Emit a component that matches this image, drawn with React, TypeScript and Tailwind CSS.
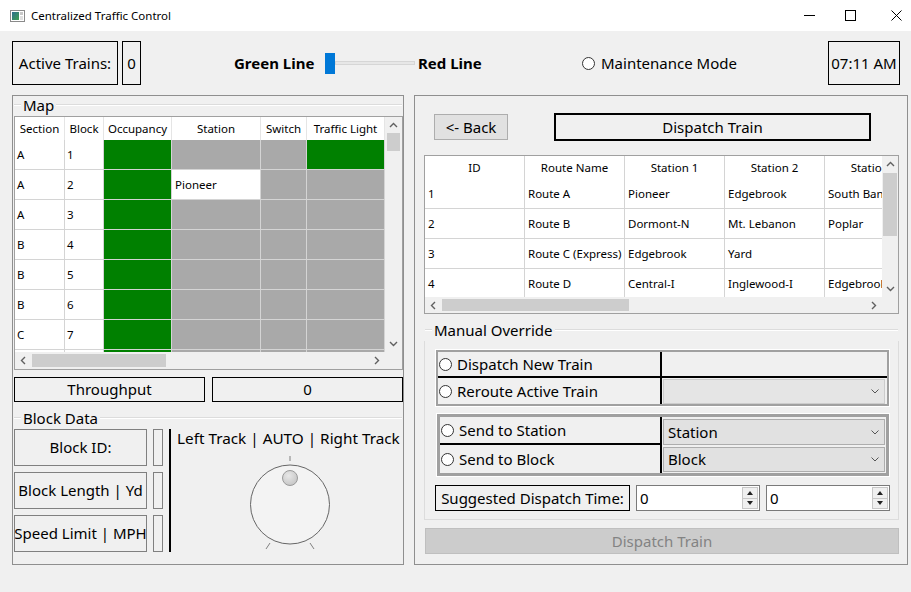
import React from 'react';

const FONT = "font-['Noto_Sans',sans-serif]";

type Dir = 'up' | 'down' | 'left' | 'right';

const Arrow = ({ dir, color = '#606060' }: { dir: Dir; color?: string }) => {
  const d: Record<Dir, string> = {
    up: 'M1 6 L4.5 2.5 L8 6',
    down: 'M1 3 L4.5 6.5 L8 3',
    left: 'M6 1 L2.5 4.5 L6 8',
    right: 'M3 1 L6.5 4.5 L3 8',
  };
  return (
    <svg width="9" height="9" viewBox="0 0 9 9">
      <path d={d[dir]} fill="none" stroke={color} strokeWidth="1.4" />
    </svg>
  );
};

const Radio = () => (
  <span className="w-[13px] h-[13px] rounded-full border border-[#333333] bg-white shrink-0" />
);

// group box caption with the etched frame line running behind it
const GroupTitle = ({ title }: { title: string }) => (
  <div className="h-[20px] pb-[3px] flex items-center shrink-0">
    <div className="ml-px w-[7px] h-[2px] border-t border-[#dcdcdc] border-b border-b-white" />
    <span className="px-[2px] mt-[2px] text-[15px] leading-none">{title}</span>
    <div className="flex-1 mr-px h-[2px] border-t border-[#dcdcdc] border-b border-b-white" />
  </div>
);

const TitleBar = () => (
  <div className="h-[31px] bg-white flex items-center shrink-0">
    <svg className="ml-[10px]" width="15" height="12" viewBox="0 0 15 12">
      <defs>
        <linearGradient id="ico" x1="0" y1="0" x2="1" y2="1">
          <stop offset="0" stopColor="#2f6f8f" />
          <stop offset="1" stopColor="#3f9f4f" />
        </linearGradient>
      </defs>
      <rect x="0.5" y="0.5" width="14" height="11" fill="#ffffff" stroke="#8a8a8a" />
      <rect x="2" y="2" width="7" height="8" fill="url(#ico)" />
      <rect x="10" y="2" width="3" height="3" fill="#c8c8c8" />
      <rect x="10" y="6" width="3" height="4" fill="#e0e0e0" />
    </svg>
    <span className="ml-[6px] text-[11.5px] leading-none">Centralized Traffic Control</span>
    <div className="ml-auto mr-[9px] flex items-center">
      <svg width="11" height="11" viewBox="0 0 11 11">
        <path d="M0 5.5 H11" stroke="#000" strokeWidth="1" />
      </svg>
      <svg className="ml-[30px]" width="11" height="11" viewBox="0 0 11 11">
        <rect x="0.5" y="0.5" width="10" height="10" fill="none" stroke="#000" strokeWidth="1" />
      </svg>
      <svg className="ml-[35px]" width="11" height="11" viewBox="0 0 11 11">
        <path d="M0.5 0.5 L10.5 10.5 M10.5 0.5 L0.5 10.5" stroke="#000" strokeWidth="1" />
      </svg>
    </div>
  </div>
);

const TopRow = () => (
  <div className="mt-[10px] h-[44px] flex items-center shrink-0">
    <div className="ml-[12px] w-[106px] h-[44px] border border-black flex items-center justify-center text-[15px]">
      Active Trains:
    </div>
    <div className="ml-[4px] w-[19px] h-[44px] border border-black flex items-center justify-center text-[15px]">
      0
    </div>
    <span className="ml-[93px] w-[89px] text-[15px] font-bold whitespace-nowrap">Green Line</span>
    <div className="ml-[2px] w-[90px] h-[21px] flex items-center">
      <div className="w-[10px] h-[21px] bg-[#0078d7]" />
      <div className="flex-1 h-[4px] bg-[#e7e7e7] border border-[#d6d6d6]" />
    </div>
    <span className="ml-[3px] w-[72px] text-[15px] font-bold whitespace-nowrap">Red Line</span>
    <div className="ml-[92px] flex items-center">
      <Radio />
      <span className="ml-[6px] text-[15px] whitespace-nowrap">Maintenance Mode</span>
    </div>
    <div className="ml-auto mr-[11px] w-[72px] h-[44px] border border-black flex items-center justify-center text-[15px] whitespace-nowrap">
      07:11 AM
    </div>
  </div>
);

const MAP_COLS = [
  { label: 'Section', w: 'w-[50px]' },
  { label: 'Block', w: 'w-[39px]' },
  { label: 'Occupancy', w: 'w-[68px]' },
  { label: 'Station', w: 'w-[89px]' },
  { label: 'Switch', w: 'w-[46px]' },
  { label: 'Traffic Light', w: 'w-[78px]' },
];

// last row only peeks out above the scrollbar, so it carries no text
const MAP_ROWS = [
  { section: 'A', block: '1', station: '', light: true },
  { section: 'A', block: '2', station: 'Pioneer', light: false },
  { section: 'A', block: '3', station: '', light: false },
  { section: 'B', block: '4', station: '', light: false },
  { section: 'B', block: '5', station: '', light: false },
  { section: 'B', block: '6', station: '', light: false },
  { section: 'C', block: '7', station: '', light: false },
  { section: '', block: '', station: '', light: false },
];

const cell = 'h-full shrink-0 border-r border-[#d4d4d4] flex items-center overflow-hidden whitespace-nowrap';

const MapTable = () => (
  <div className="ml-px w-[389px] h-[254px] border border-[#a0a0a0] flex flex-col shrink-0 bg-white">
    <div className="flex h-[235px]">
      <div className="w-[370px] overflow-hidden text-[11.5px]">
        <div className="flex h-[23px] bg-white">
          {MAP_COLS.map((c) => (
            <div key={c.label} className={`${cell} ${c.w} justify-center border-[#e5e5e5]`}>
              {c.label}
            </div>
          ))}
        </div>
        {MAP_ROWS.map((r, i) => (
          <div key={i} className="flex h-[30px] border-b border-[#d4d4d4]">
            <div className={`${cell} w-[50px] pl-[2px] bg-white`}>{r.section}</div>
            <div className={`${cell} w-[39px] pl-[2px] bg-white`}>{r.block}</div>
            <div className={`${cell} w-[68px] bg-[#008000]`} />
            <div className={`${cell} w-[89px] pl-[3px] ${r.station ? 'bg-white' : 'bg-[#a9a9a9]'}`}>
              {r.station}
            </div>
            <div className={`${cell} w-[46px] bg-[#a9a9a9]`} />
            <div className={`${cell} w-[78px] ${r.light ? 'bg-[#008000]' : 'bg-[#a9a9a9]'}`} />
          </div>
        ))}
      </div>
      <div className="w-[17px] bg-[#f0f0f0] flex flex-col">
        <div className="h-[16px] flex items-center justify-center">
          <Arrow dir="up" />
        </div>
        <div className="mx-[2px] h-[18px] bg-[#cdcdcd]" />
        <div className="flex-1" />
        <div className="h-[17px] flex items-center justify-center">
          <Arrow dir="down" />
        </div>
      </div>
    </div>
    <div className="flex h-[17px] bg-[#f0f0f0]">
      <div className="w-[17px] flex items-center justify-center">
        <Arrow dir="left" />
      </div>
      <div className="flex-1 flex items-center">
        <div className="w-[134px] h-[13px] bg-[#cdcdcd]" />
      </div>
      <div className="w-[17px] flex items-center justify-center">
        <Arrow dir="right" />
      </div>
      <div className="w-[17px]" />
    </div>
  </div>
);

const Dial = () => (
  <svg width="100" height="100" viewBox="0 0 100 100" className="ml-[69px]">
    <defs>
      <radialGradient id="knob" cx="0.4" cy="0.35" r="0.7">
        <stop offset="0" stopColor="#e8e8e8" />
        <stop offset="1" stopColor="#c4c4c4" />
      </radialGradient>
    </defs>
    <path d="M50 5 V10" stroke="#808080" strokeWidth="1" />
    <path d="M26 98 L30 92 M74 98 L70 92" stroke="#808080" strokeWidth="1" />
    <circle cx="50" cy="53.5" r="39.5" fill="#f3f3f3" stroke="#666666" strokeWidth="1" />
    <circle cx="50" cy="27" r="7.5" fill="url(#knob)" stroke="#9a9a9a" strokeWidth="1" />
  </svg>
);

const BlockData = () => (
  <div className="flex ml-px">
    <div className="flex flex-col gap-[6px]">
      {['Block ID:', 'Block Length | Yd', 'Speed Limit | MPH'].map((l) => (
        <div
          key={l}
          className="w-[133px] h-[37px] border border-[#808080] flex items-center justify-center text-[15px] whitespace-nowrap overflow-hidden"
        >
          {l}
        </div>
      ))}
    </div>
    <div className="flex flex-col gap-[6px] ml-[6px]">
      {[0, 1, 2].map((i) => (
        <div key={i} className="w-[10px] h-[37px] border border-[#808080]" />
      ))}
    </div>
    <div className="ml-[6px] w-[2px] h-[123px] bg-black" />
    <div className="flex-1 flex flex-col">
      <div className="ml-[6px] -mt-[2px] text-[15.3px] leading-[22px] whitespace-nowrap">Left Track | AUTO | Right Track</div>
      <div className="mt-[2px]">
        <Dial />
      </div>
    </div>
  </div>
);

const LeftPanel = () => (
  <div className="ml-[12px] w-[392px] h-[470px] border border-[#8f8f8f] flex flex-col">
    <GroupTitle title="Map" />
    <MapTable />
    <div className="flex mt-[7px] ml-px gap-[7px]">
      <div className="w-[191px] h-[25px] border border-black flex items-center justify-center text-[15px]">
        Throughput
      </div>
      <div className="w-[191px] h-[25px] border border-black flex items-center justify-center text-[15px]">
        0
      </div>
    </div>
    <div className="mt-[7px]">
      <GroupTitle title="Block Data" />
    </div>
    <BlockData />
  </div>
);

const ROUTE_COLS = ['ID', 'Route Name', 'Station 1', 'Station 2', 'Station 3'];
const ROUTES = [
  ['1', 'Route A', 'Pioneer', 'Edgebrook', 'South Bank'],
  ['2', 'Route B', 'Dormont-N', 'Mt. Lebanon', 'Poplar'],
  ['3', 'Route C (Express)', 'Edgebrook', 'Yard', ''],
  ['4', 'Route D', 'Central-I', 'Inglewood-I', 'Edgebrook'],
];

const RouteTable = () => (
  <div className="ml-[9px] w-[475px] h-[159px] border border-[#a0a0a0] flex flex-col shrink-0 bg-white">
    <div className="flex h-[141px]">
      <div className="w-[457px] overflow-hidden text-[11.5px]">
        <div className="flex h-[23px]">
          {ROUTE_COLS.map((c) => (
            <div key={c} className={`${cell} w-[100px] justify-center`}>
              {c}
            </div>
          ))}
        </div>
        {ROUTES.map((r) => (
          <div key={r[0]} className="flex h-[30px] border-b border-[#d4d4d4]">
            {r.map((v, i) => (
              <div key={i} className={`${cell} w-[100px] pl-[3px]`}>
                {v}
              </div>
            ))}
          </div>
        ))}
      </div>
      <div className="w-[16px] bg-[#f0f0f0] flex flex-col">
        <div className="h-[17px] flex items-center justify-center">
          <Arrow dir="up" />
        </div>
        <div className="mx-px h-[63px] bg-[#cdcdcd]" />
        <div className="flex-1" />
        <div className="h-[17px] flex items-center justify-center">
          <Arrow dir="down" />
        </div>
      </div>
    </div>
    <div className="flex h-[16px] bg-[#f0f0f0]">
      <div className="w-[17px] flex items-center justify-center">
        <Arrow dir="left" />
      </div>
      <div className="flex-1 flex items-center">
        <div className="w-[187px] h-[12px] bg-[#cdcdcd]" />
      </div>
      <div className="w-[17px] flex items-center justify-center">
        <Arrow dir="right" />
      </div>
      <div className="w-[16px]" />
    </div>
  </div>
);

const Combo = ({ text, disabled, h }: { text?: string; disabled?: boolean; h: string }) => (
  <div
    className={`${h} flex items-center justify-between pl-[4px] pr-[5px] text-[15px] border ${
      disabled ? 'bg-[#e5e5e5] border-[#cccccc]' : 'bg-[#e1e1e1] border-[#adadad]'
    }`}
  >
    <span>{text}</span>
    <svg width="8" height="5" viewBox="0 0 8 5">
      <path d="M0.5 0.5 L4 4 L7.5 0.5" fill="none" stroke="#555" strokeWidth="1" />
    </svg>
  </div>
);

const Spin = () => (
  <div className="ml-[6px] w-[124px] h-[26px] bg-white border border-[#7a7a7a] flex items-center">
    <span className="flex-1 pl-[3px] text-[15px]">0</span>
    <div className="w-[16px] h-[22px] mr-px flex flex-col">
      <div className="flex-1 bg-[#f0f0f0] border border-[#c8c8c8] flex items-center justify-center">
        <svg width="6" height="4" viewBox="0 0 6 4">
          <path d="M0 4 L3 0 L6 4 Z" fill="#222" />
        </svg>
      </div>
      <div className="flex-1 bg-[#f0f0f0] border border-t-0 border-[#c8c8c8] flex items-center justify-center">
        <svg width="6" height="4" viewBox="0 0 6 4">
          <path d="M0 0 L3 4 L6 0 Z" fill="#222" />
        </svg>
      </div>
    </div>
  </div>
);

const ManualOverride = () => (
  <div className="mt-[7px] ml-[9px] w-[475px] flex flex-col">
    <GroupTitle title="Manual Override" />
    <div className="border-x border-b border-[#dcdcdc] pt-[8px] pb-[8px] flex flex-col">
      <div className="ml-[10px] w-[455px] border border-white">
        <div className="border-2 border-[#a0a0a0] flex flex-col text-[15px]">
          <div className="flex h-[26px]">
            <div className="w-[224px] border-r-2 border-b-2 border-black flex items-center pl-px">
              <Radio />
              <span className="ml-[5px] whitespace-nowrap">Dispatch New Train</span>
            </div>
            <div className="flex-1 border-b-2 border-black" />
          </div>
          <div className="flex h-[26px]">
            <div className="w-[224px] border-r-2 border-black flex items-center pl-px">
              <Radio />
              <span className="ml-[5px] whitespace-nowrap">Reroute Active Train</span>
            </div>
            <div className="flex-1 pl-px pr-[2px] pt-px">
              <Combo disabled h="h-[25px]" />
            </div>
          </div>
        </div>
      </div>
      <div className="mt-[6px] ml-[11px] w-[454px] border border-white">
        <div className="border-[3px] border-[#a0a0a0] flex flex-col text-[15px]">
          <div className="flex h-[28px]">
            <div className="w-[222px] border-r-2 border-b-2 border-black flex items-center pl-px">
              <Radio />
              <span className="ml-[5px] whitespace-nowrap">Send to Station</span>
            </div>
            <div className="flex-1 pl-px pr-px pt-[2px]">
              <Combo text="Station" h="h-[26px]" />
            </div>
          </div>
          <div className="flex h-[28px]">
            <div className="w-[222px] border-r-2 border-black flex items-center pl-px">
              <Radio />
              <span className="ml-[5px] whitespace-nowrap">Send to Block</span>
            </div>
            <div className="flex-1 pl-px pr-px pt-[2px]">
              <Combo text="Block" h="h-[25px]" />
            </div>
          </div>
        </div>
      </div>
      <div className="mt-[8px] ml-[10px] flex items-center">
        <div className="w-[195px] h-[26px] border border-black flex items-center justify-center text-[15px] whitespace-nowrap">
          Suggested Dispatch Time:
        </div>
        <Spin />
        <Spin />
      </div>
    </div>
  </div>
);

const RightPanel = () => (
  <div className="ml-[10px] w-[494px] h-[470px] border border-[#8f8f8f] flex flex-col">
    <div className="mt-[17px] h-[28px] flex items-center">
      <div className="ml-[19px] w-[74px] h-[26px] bg-[#e1e1e1] border border-[#adadad] flex items-center justify-center text-[15px]">
        &lt;- Back
      </div>
      <div className="ml-[46px] w-[317px] h-[28px] border-2 border-black flex items-center justify-center text-[15px]">
        Dispatch Train
      </div>
    </div>
    <div className="mt-[14px]">
      <RouteTable />
    </div>
    <ManualOverride />
    <div className="mt-[8px] ml-[10px] w-[474px] h-[26px] bg-[#cccccc] border border-[#bfbfbf] flex items-center justify-center text-[15px] text-[#838383]">
      Dispatch Train
    </div>
  </div>
);

export default function App() {
  return (
    <div className={`w-[911px] h-[592px] bg-[#f0f0f0] overflow-hidden flex flex-col text-black ${FONT}`}>
      <TitleBar />
      <TopRow />
      <div className="flex mt-[10px]">
        <LeftPanel />
        <RightPanel />
      </div>
    </div>
  );
}
